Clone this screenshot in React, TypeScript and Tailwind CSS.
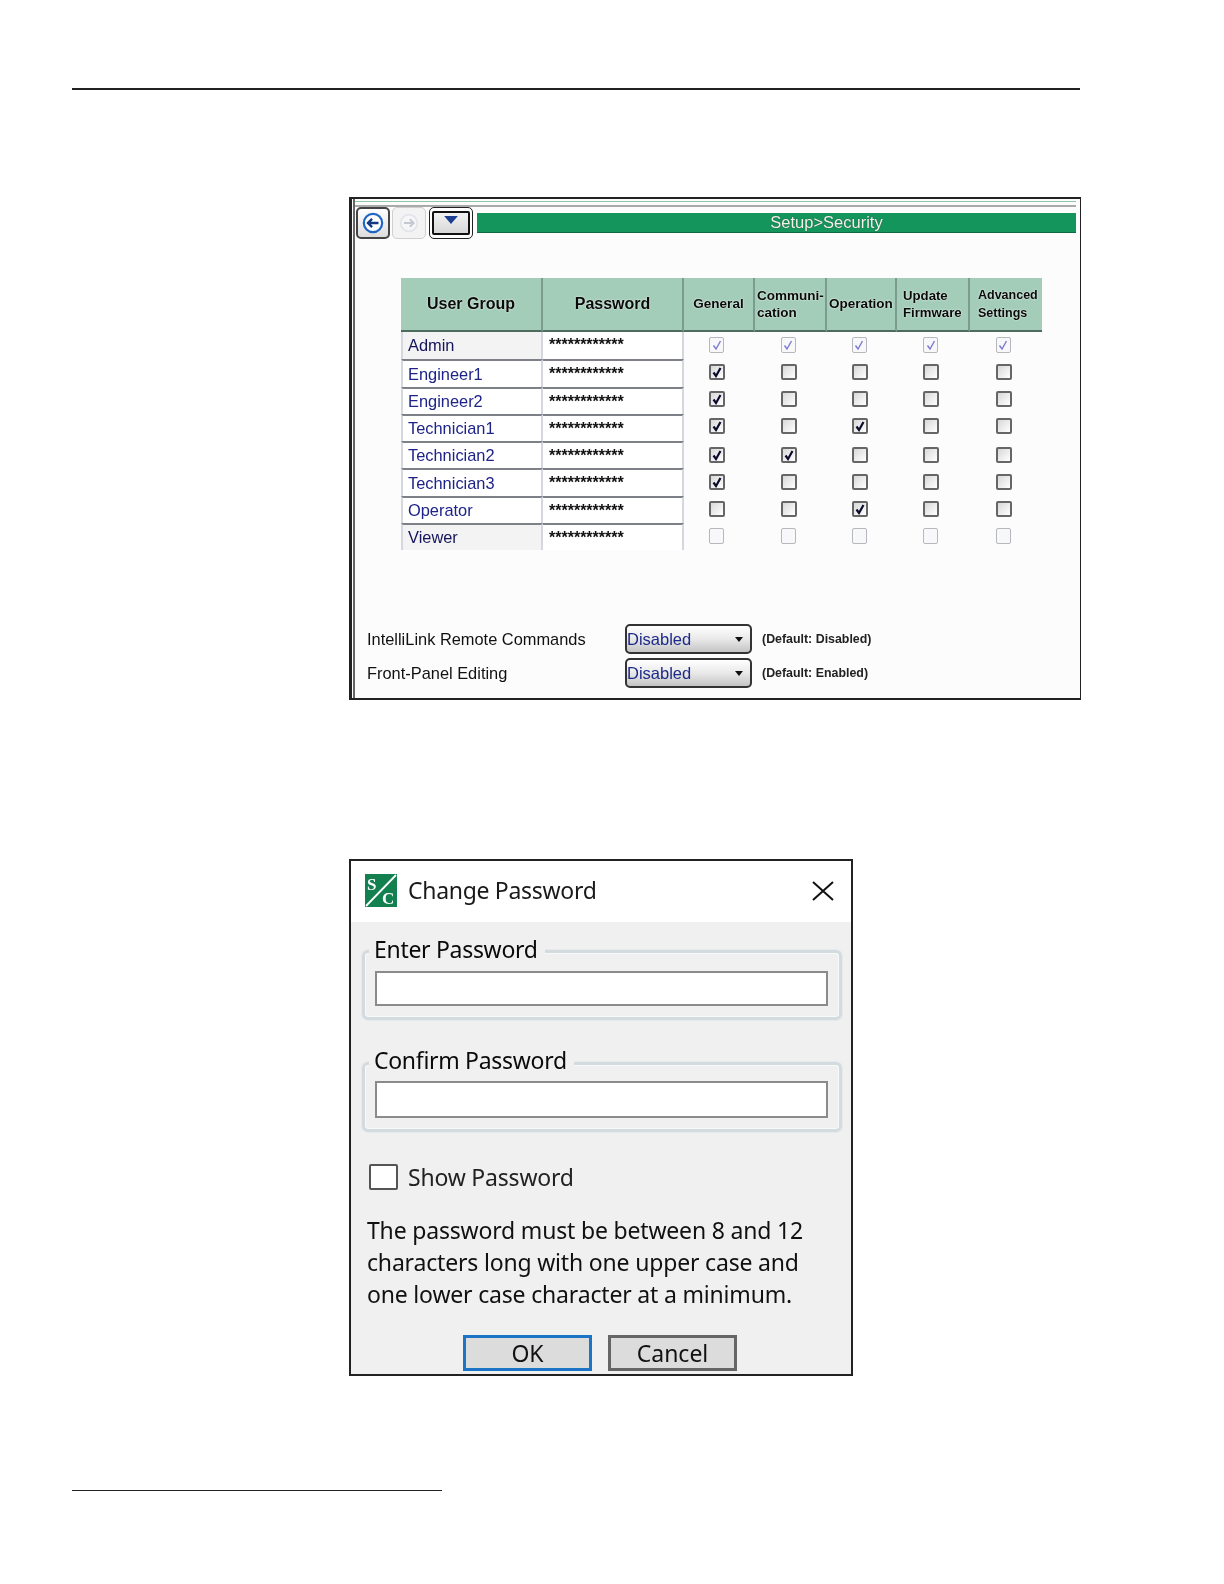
import React from "react";

const rows: { name: string; dim?: boolean; on: boolean[]; disabled?: boolean; bg?: boolean }[] = [
  { name: "Admin", dim: true, bg: true, disabled: true, on: [true, true, true, true, true] },
  { name: "Engineer1", on: [true, false, false, false, false] },
  { name: "Engineer2", on: [true, false, false, false, false] },
  { name: "Technician1", on: [true, false, true, false, false] },
  { name: "Technician2", on: [true, true, false, false, false] },
  { name: "Technician3", on: [true, false, false, false, false] },
  { name: "Operator", on: [false, false, true, false, false] },
  { name: "Viewer", dim: true, bg: true, disabled: true, on: [false, false, false, false, false] },
];

function Check({ on, disabled }: { on: boolean; disabled?: boolean }) {
  return (
    <div
      className={
        disabled
          ? "w-[15px] h-[16px] rounded-[2px] border border-[#b5b8bd] bg-[#f8f8fb] flex items-center justify-center"
          : "w-[16px] h-[16px] rounded-[2px] border-2 border-[#666666] bg-gradient-to-br from-[#d8d8d8] to-white flex items-center justify-center"
      }
    >
      {on && (
        <svg viewBox="0 0 12 12" className="w-[12px] h-[12px]">
          <path
            d="M2.5 6.5 L5 10 L9.5 2"
            fill="none"
            stroke={disabled ? "#7a7ad0" : "#0b0b2c"}
            strokeWidth={disabled ? 1.4 : 2.2}
          />
        </svg>
      )}
    </div>
  );
}

function Head({ children, className, last }: { children: React.ReactNode; className: string; last?: boolean }) {
  return (
    <div
      className={
        "flex items-center border-b-2 border-b-[#4f6b60] bg-[#a3cdb9] font-bold text-[#0a0a0a] [text-shadow:0_0_2px_#ffffff] " +
        (last ? "" : "border-r-2 border-r-[#7d9c90] ") +
        className
      }
    >
      {children}
    </div>
  );
}

function SelectBox() {
  return (
    <div className="w-[127px] h-[30px] rounded-[5px] border-2 border-[#333333] bg-gradient-to-b from-white via-[#e9e9e9] to-[#c4c4c4] flex items-center justify-between pr-[7px] text-[16.5px] text-[#1c2a8a]">
      <span>Disabled</span>
      <svg viewBox="0 0 8 5" className="w-[8px] h-[5px]">
        <path d="M0 0 H8 L4 5 Z" fill="#111111" />
      </svg>
    </div>
  );
}

function Group({
  label,
  inputH,
  labelTop,
  className,
}: {
  label: string;
  inputH: string;
  labelTop: string;
  className: string;
}) {
  return (
    <div
      className={
        "relative ml-[11px] mr-[9px] rounded-[6px] border-[3px] border-[#d3dbde] pl-[10px] pr-[11px] shadow-[inset_0_0_0_1px_#f8fafa,0_0_0_1px_#e6eaec] " +
        className
      }
    >
      <span
        className={
          "absolute left-[4px] bg-[#f0f0f0] pl-[5px] pr-[7px] text-[23px] tracking-[-0.3px] leading-[32px] text-[#0a0a0a] " +
          labelTop
        }
      >
        {label}
      </span>
      <div className={"border-2 border-[#8b8b8b] bg-white " + inputH} />
    </div>
  );
}

export default function App() {
  return (
    <div className="w-[1224px] h-[1584px] bg-white flex flex-col overflow-hidden font-['Liberation_Sans',sans-serif]">
      <div className="mt-[88px] ml-[72px] w-[1008px] h-[2px] bg-[#222222]" />

      {/* Security panel */}
      <div className="mt-[107px] ml-[349px] w-[732px] h-[503px] border-y-2 border-r border-l-[3px] border-[#222222] bg-white blur-[0.3px]">
        <div className="h-full ml-[1px] border-l-2 border-[#666666] bg-[#fcfcfc] flex flex-col">
          <div className="mt-[2px] mr-[4px] h-[1px] bg-[#8fc7ac]" />
          <div className="mt-[3px] mr-[4px] h-[2px] bg-[#aaaaaa]" />
          <div className="flex items-center pl-[1px] pr-[4px]">
            <div className="w-[34px] h-[32px] rounded-[5px] border-2 border-[#444444] bg-gradient-to-b from-white to-[#dddddd] flex items-center justify-center">
              <svg viewBox="0 0 24 24" className="w-[22px] h-[22px]">
                <circle cx="12" cy="12" r="10" fill="#fff" stroke="#1f66c4" strokeWidth="2.4" />
                <path d="M18 12 H7 M11 7.5 L6.5 12 L11 16.5" fill="none" stroke="#123a80" strokeWidth="2.6" />
              </svg>
            </div>
            <div className="ml-[2px] w-[34px] h-[32px] rounded-[5px] border border-[#cfcfcf] bg-[#f3f3f3] flex items-center justify-center">
              <svg viewBox="0 0 24 24" className="w-[20px] h-[20px]">
                <circle cx="12" cy="12" r="10" fill="#f6f6f8" stroke="#e2e4ea" strokeWidth="2" />
                <path d="M6 12 H17 M13 7.5 L17.5 12 L13 16.5" fill="none" stroke="#c4c8d2" strokeWidth="2.4" />
              </svg>
            </div>
            <div className="ml-[3px] w-[44px] h-[32px] rounded-[5px] border border-[#222222] bg-white flex items-center justify-center">
              <div className="w-[38px] h-[24px] rounded-[2px] border-2 border-[#111111] bg-gradient-to-b from-[#f2f2f2] to-[#d8d8d8] flex items-start justify-center pt-[3px]">
                <svg viewBox="0 0 12 7" className="w-[14px] h-[8px]">
                  <path d="M0 0 H12 L6 7 Z" fill="#1c3f94" />
                </svg>
              </div>
            </div>
            <div className="ml-[4px] flex-1 h-[20px] bg-[#14955b] border-b border-[#0d6b41] flex items-center justify-center pl-[100px] text-[16.5px] leading-none text-[#f0f5e8] [text-shadow:0_0_1px_#334]">
              Setup&gt;Security
            </div>
          </div>

          {/* table */}
          <div className="mt-[39px] ml-[46px] w-[641px]">
            <div className="grid grid-cols-[142px_141px_71px_72px_70px_73px_72px] h-[54px]">
              <Head className="justify-center text-[16px]">User Group</Head>
              <Head className="justify-center text-[16px]">Password</Head>
              <Head className="justify-center text-[13.5px]">General</Head>
              <Head className="pl-[2px] text-[13.5px] leading-[17px]">
                <span>
                  Communi-
                  <br />
                  cation
                </span>
              </Head>
              <Head className="justify-center text-[13.5px]">Operation</Head>
              <Head className="pl-[6px] text-[13.2px] leading-[17px]">
                <span>
                  Update
                  <br />
                  Firmware
                </span>
              </Head>
              <Head last className="pl-[8px] text-[12.5px] leading-[18px]">
                <span>
                  Advanced
                  <br />
                  Settings
                </span>
              </Head>
            </div>
            {rows.map((r, i) => (
              <div key={r.name} className="grid grid-cols-[142px_141px_71px_72px_70px_73px_72px] h-[27.25px]">
                <div
                  className={
                    "flex items-center pl-[5px] border-l-2 border-r-2 border-[#d5d7de] text-[16.4px] " +
                    (i > 0 ? "border-t-2 border-t-[#7e8088] " : "") +
                    (r.bg ? "bg-[#f3f3f3] text-[#14145c]" : "bg-white text-[#1d2388]")
                  }
                >
                  {r.name}
                </div>
                <div
                  className={
                    "pl-[6px] pt-[3px] border-r-2 border-[#d5d7de] bg-white text-[16px] font-bold leading-[19px] text-[#111111] " +
                    (i > 0 ? "border-t-2 border-t-[#7e8088]" : "")
                  }
                >
                  ************
                </div>
                {r.on.map((c, j) => (
                  <div
                    key={j}
                    className={
                      "flex items-center justify-center " +
                      (i >= 4 ? "" : "pb-[2px] ") +
                      (r.disabled ? "pr-[6px]" : "pr-[5px]")
                    }
                  >
                    <Check on={c} disabled={r.disabled} />
                  </div>
                ))}
              </div>
            ))}
          </div>

          {/* settings */}
          <div className="mt-[74px] ml-[12px] flex items-center h-[30px]">
            <div className="w-[258px] text-[16.4px] text-[#111111]">IntelliLink Remote Commands</div>
            <SelectBox />
            <div className="ml-[10px] text-[12.4px] font-bold text-[#222222]">(Default: Disabled)</div>
          </div>
          <div className="mt-[4px] ml-[12px] flex items-center h-[30px]">
            <div className="w-[258px] text-[16.4px] text-[#111111]">Front-Panel Editing</div>
            <SelectBox />
            <div className="ml-[10px] text-[12.4px] font-bold text-[#222222]">(Default: Enabled)</div>
          </div>
        </div>
      </div>

      {/* Change password dialog */}
      <div className="mt-[159px] ml-[349px] w-[504px] h-[517px] border-2 border-[#222222] bg-[#f0f0f0] flex flex-col font-['Noto_Sans',sans-serif] blur-[0.3px]">
        <div className="h-[61px] bg-white flex items-center pl-[14px] pr-[17px] pb-[2px]">
          <svg viewBox="0 0 32 33" className="w-[32px] h-[33px]">
            <rect width="32" height="33" fill="#12804f" />
            <path d="M1 32 L31 1" stroke="#ffffff" strokeWidth="1.8" />
            <text x="2" y="16" fontSize="17" fontWeight="700" fontFamily="Liberation Serif, serif" fill="#ffffff">S</text>
            <text x="17" y="30" fontSize="17" fontWeight="700" fontFamily="Liberation Serif, serif" fill="#ffffff">C</text>
          </svg>
          <div className="ml-[11px] text-[23px] tracking-[-0.3px] leading-none text-[#1a1a1a]">Change Password</div>
          <svg viewBox="0 0 22 20" className="ml-auto w-[22px] h-[20px]">
            <path d="M1 1 L21 19 M21 1 L1 19" stroke="#111111" strokeWidth="2" fill="none" />
          </svg>
        </div>

        <Group label="Enter Password" labelTop="top-[-20px]" inputH="h-[35px]" className="mt-[28px] pt-[18px] pb-[11px]" />
        <Group label="Confirm Password" labelTop="top-[-21px]" inputH="h-[37px]" className="mt-[42px] pt-[16px] pb-[11px]" />

        <div className="mt-[32px] ml-[18px] flex items-center">
          <div className="w-[29px] h-[26px] rounded-[2px] border-2 border-[#555555] bg-white" />
          <div className="ml-[10px] text-[23px] tracking-[-0.2px] leading-none text-[#222222]">Show Password</div>
        </div>
        <div className="mt-[24px] ml-[16px] text-[23px] tracking-[-0.18px] leading-[32px] text-[#111111] whitespace-nowrap">
          The password must be between 8 and 12
          <br />
          characters long with one upper case and
          <br />
          one lower case character at a minimum.
        </div>
        <div className="mt-[25px] ml-[112px] flex gap-[16px]">
          <div className="w-[129px] h-[36px] border-[3px] border-[#1b75c4] bg-[#dcdcdc] flex items-center justify-center text-[23px] pt-[1px] leading-none text-[#111111]">
            OK
          </div>
          <div className="w-[129px] h-[36px] border-[3px] border-[#666666] bg-[#dcdcdc] flex items-center justify-center text-[23px] pt-[1px] leading-none text-[#111111]">
            Cancel
          </div>
        </div>
      </div>

      <div className="mt-[114px] ml-[72px] w-[370px] h-[1px] bg-[#222222]" />
    </div>
  );
}
